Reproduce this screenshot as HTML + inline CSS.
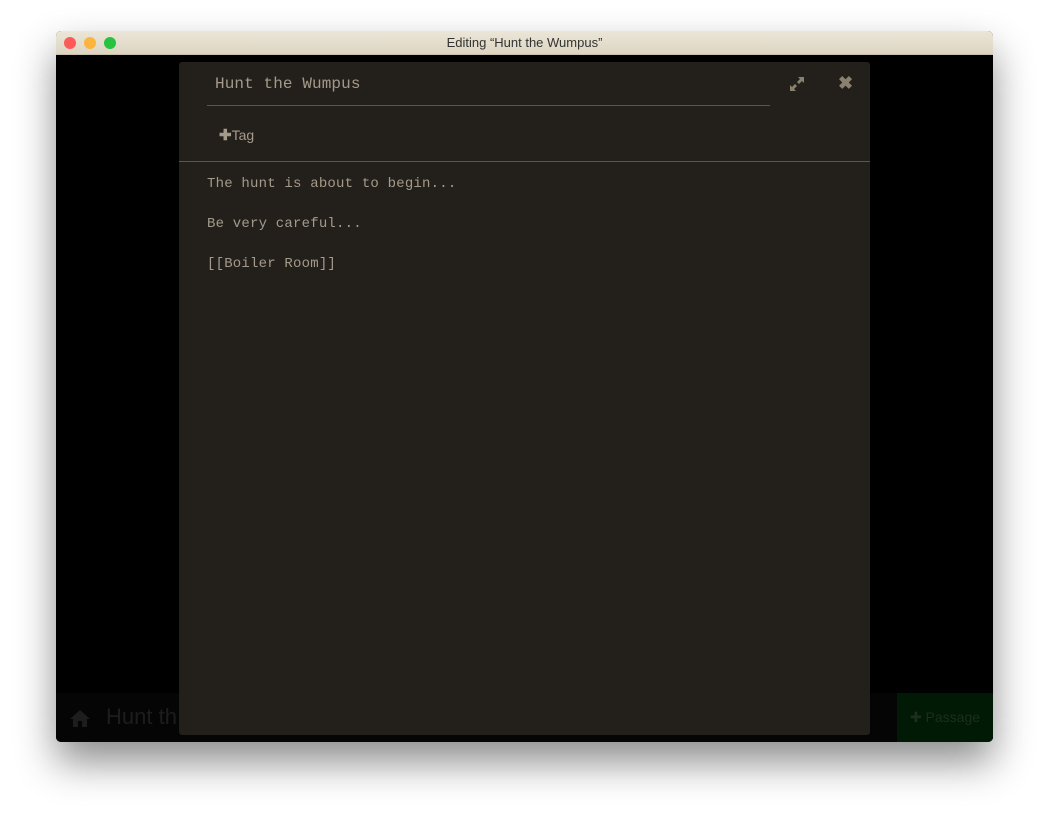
<!DOCTYPE html>
<html><head><style>
body{margin:0;width:1049px;height:823px;background:#fff;position:relative;overflow:hidden;font-family:"Liberation Sans",sans-serif}
.win{position:absolute;left:56px;top:31px;width:937px;height:711px;border-radius:5px;overflow:hidden;background:#000;box-shadow:0 20px 40px rgba(0,0,0,.45)}
.tb{height:23px;background:linear-gradient(#ebe6d9,#ddd5c2);border-bottom:1px solid #c9c0ad;text-align:center;font-size:13px;line-height:23px;color:#333}
.dot{position:absolute;top:6px;width:12px;height:12px;border-radius:50%}
.bar{position:absolute;left:0;top:662px;width:937px;height:49px;background:#050505}
.dlg{position:absolute;left:123px;top:31px;width:691px;height:673px;background:#23201b;border-radius:3px;color:#a49a8b}
.mono{font-family:"Liberation Mono",monospace}
</style></head><body>
<div class="win">
<div class="tb">Editing “Hunt the Wumpus”</div>
<div class="dot" style="left:8px;background:#fc5b57"></div>
<div class="dot" style="left:28px;background:#fdb43c"></div>
<div class="dot" style="left:48px;background:#25c33f"></div>
<div class="bar">
<svg style="position:absolute;left:13px;top:16px" width="22" height="18" viewBox="0 0 22 18"><path d="M11 1 L21 10 L18 10 L18 18 L13 18 L13 12 L9 12 L9 18 L4 18 L4 10 L1 10Z" fill="#1d1d1d"/></svg>
<div style="position:absolute;left:50px;top:11px;font-size:22px;color:#1d1d1d">Hunt th</div>
<div style="position:absolute;left:800px;top:16px;font-size:14px;color:#1d1d1d">y</div>
<div style="position:absolute;left:841px;top:0;width:96px;height:49px;background:#001a05;color:#1e2e1e;font-size:14px;line-height:49px;text-align:center">✚ Passage</div>
</div>
<div class="dlg">
<div class="mono" style="position:absolute;left:36px;top:13px;font-size:16px;letter-spacing:0.1px">Hunt the Wumpus</div>
<div style="position:absolute;left:28px;top:43px;width:563px;height:1px;background:#5e564b"></div>
<svg style="position:absolute;left:610px;top:14px" width="16" height="16" viewBox="0 0 16 16"><path d="M9 1h6v6l-2-2-3 3-2-2 3-3zM7 15H1V9l2 2 3-3 2 2-3 3z" fill="#8a8070"/></svg>
<div style="position:absolute;left:659px;top:11px;font-size:18px;font-weight:bold;color:#8a8070">✖</div>
<div style="position:absolute;left:40px;top:64px;font-size:14px"><b style="font-size:15px">✚</b>Tag</div>
<div style="position:absolute;left:0;top:99px;width:691px;height:1px;background:#5e564b"></div>
<div class="mono" style="position:absolute;left:28px;top:102px;font-size:14px;line-height:40px;letter-spacing:0.2px">The hunt is about to begin...<br>Be very careful...<br>[[Boiler Room]]</div>
</div>
</div>
</body></html>
